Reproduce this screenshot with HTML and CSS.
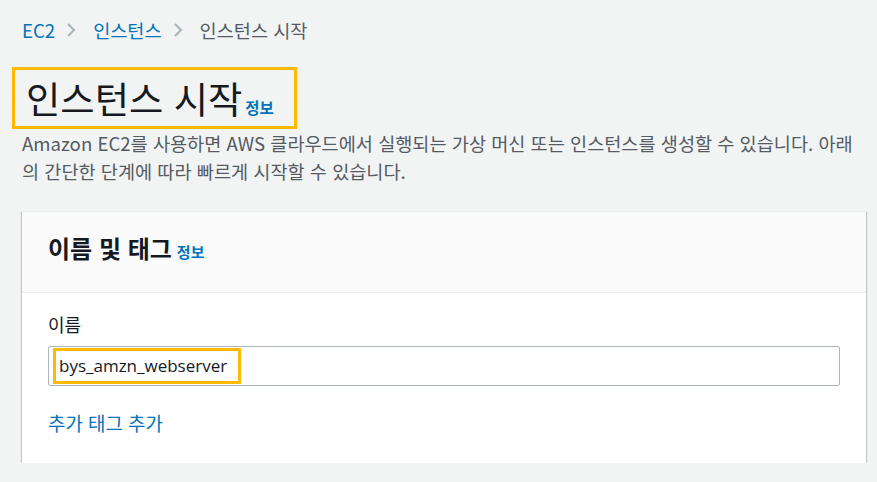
FILE: index.html
```html
<!DOCTYPE html>
<html lang="ko">
<head>
<meta charset="utf-8">
<link rel="stylesheet" href="styles.css">
</head>
<body>
<div class="page">
  <nav class="crumbs">
    <a class="crumb-link">EC2</a>
    <svg class="chev" width="12" height="16" viewBox="0 0 12 16"><polyline points="3,2 9,8 3,14" fill="none" stroke="#aab7b8" stroke-width="2.2"/></svg>
    <a class="crumb-link">인스턴스</a>
    <svg class="chev" width="12" height="16" viewBox="0 0 12 16"><polyline points="3,2 9,8 3,14" fill="none" stroke="#aab7b8" stroke-width="2.2"/></svg>
    <span class="crumb-current">인스턴스 시작</span>
  </nav>

  <div class="title-box">
    <h1 class="title">인스턴스 시작</h1><a class="info info-lg">정보</a>
  </div>
  <p class="desc">Amazon EC2를 사용하면 AWS 클라우드에서 실행되는 가상 머신 또는 인스턴스를 생성할 수 있습니다. 아래<wbr>의 간단한 단계에 따라 빠르게 시작할 수 있습니다.</p>

  <section class="card">
    <header class="card-head">
      <h2 class="card-title">이름 및 태그</h2><a class="info info-sm">정보</a>
    </header>
    <div class="card-body">
      <div class="label">이름</div>
      <div class="input"><span class="input-value">bys_amzn_webserver</span></div>
      <a class="add-tag">추가 태그 추가</a>
    </div>
  </section>
</div>
</body>
</html>
```

FILE: styles.css
```css
* { box-sizing: border-box; }
html, body {
  margin: 0;
  background: #f2f3f3;
}
body {
  font-family: "Noto Sans CJK KR", "Open Sans", sans-serif;
  color: #16191f;
}
.page {
  padding: 18px 11px 0 22px;
}
.crumbs {
  display: flex;
  align-items: center;
  height: 24px;
  font-size: 18.6px;
  line-height: 24px;
}
.crumb-link { color: #0073bb; }
.crumb-current { color: #545b64; }
.chev {
  display: block;
  margin: 0 16px 0 10px;
}
.title-box {
  display: inline-block;
  margin: 25px 0 0 -10px;
  border: 3px solid #ffb900;
  height: 62px;
  padding: 0 20px 0 11px;
  white-space: nowrap;
  line-height: 56px;
}
.title {
  display: inline;
  margin: 0;
  font-size: 37.3px;
  font-weight: 400;
  color: #16191f;
}
.info {
  color: #0073bb;
  font-weight: 700;
}
.info-lg {
  font-size: 15.5px;
  margin-left: 3px;
}
.desc {
  margin: 0;
  font-size: 18.6px;
  line-height: 28px;
  color: #545b64;
}
.card {
  margin-top: 26px;
  background: #fff;
  border-top: 1px solid #eaeded;
  box-shadow: 0 1px 1px 0 rgba(0, 28, 36, 0.3), 1px 1px 1px 0 rgba(0, 28, 36, 0.15), -1px 1px 1px 0 rgba(0, 28, 36, 0.15);
}
.card-head {
  height: 81px;
  background: #fafafa;
  border-bottom: 1px solid #eaeded;
  padding: 21px 26px 0;
  line-height: 30px;
  white-space: nowrap;
}
.card-title {
  display: inline;
  margin: 0;
  font-size: 24px;
  font-weight: 700;
  color: #16191f;
}
.info-sm {
  font-size: 15px;
  margin-left: 5px;
}
.card-body {
  padding: 19px 26px 28px;
  display: flex;
  flex-direction: column;
  align-items: flex-start;
}
.label {
  font-size: 18px;
  line-height: 24px;
  color: #16191f;
}
.input {
  margin-top: 10px;
  align-self: stretch;
  height: 40px;
  border: 1px solid #aab7b8;
  border-radius: 2px;
  background: #fff;
  display: flex;
  align-items: center;
  padding: 0 4px;
}
.input-value {
  display: block;
  height: 36px;
  border: 3px solid #ffb900;
  padding: 0 11px 0 3px;
  font-family: "Open Sans", sans-serif;
  font-size: 17px;
  line-height: 30px;
  color: #16191f;
}
.add-tag {
  margin-top: 25px;
  font-size: 18.9px;
  line-height: 24px;
  color: #0073bb;
}
```
